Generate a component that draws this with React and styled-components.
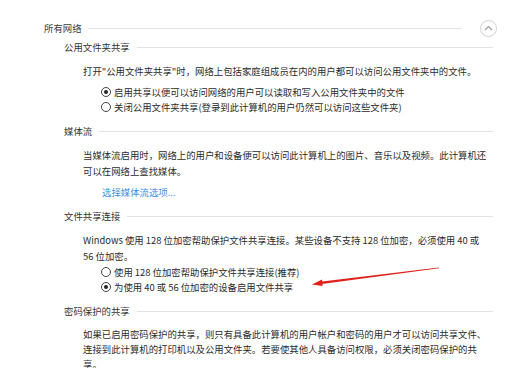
import React from 'react';
import styled, { createGlobalStyle } from 'styled-components';

const GlobalStyle = createGlobalStyle`
  body {
    margin: 0;
    background: #fff;
  }
`;

const sections = [
  {
    title: '公用文件夹共享',
    text: ['打开"公用文件夹共享"时，网络上包括家庭组成员在内的用户都可以访问公用文件夹中的文件。'],
    options: [
      { label: '启用共享以便可以访问网络的用户可以读取和写入公用文件夹中的文件', checked: true },
      { label: '关闭公用文件夹共享(登录到此计算机的用户仍然可以访问这些文件夹)', checked: false },
    ],
    gap: 5,
  },
  {
    title: '媒体流',
    text: [
      '当媒体流启用时，网络上的用户和设备便可以访问此计算机上的图片、音乐以及视频。此计算机还',
      '可以在网络上查找媒体。',
    ],
    link: '选择媒体流选项...',
  },
  {
    title: '文件共享连接',
    text: [
      'Windows 使用 128 位加密帮助保护文件共享连接。某些设备不支持 128 位加密，必须使用 40 或',
      '56 位加密。',
    ],
    options: [
      { label: '使用 128 位加密帮助保护文件共享连接(推荐)', checked: false },
      { label: '为使用 40 或 56 位加密的设备启用文件共享', checked: true },
    ],
    gap: 0,
  },
  {
    title: '密码保护的共享',
    text: [
      '如果已启用密码保护的共享，则只有具备此计算机的用户帐户和密码的用户才可以访问共享文件、',
      '连接到此计算机的打印机以及公用文件夹。若要使其他人具备访问权限，必须关闭密码保护的共',
      '享。',
    ],
    lineHeight: 15,
  },
];

const App = () => {
  return (
    <>
      <GlobalStyle />
      <Page>
        <TopRow>
          <TopTitle>所有网络</TopTitle>
          <Rule />
          <CollapseButton aria-label="折叠">
            <svg width="9" height="6" viewBox="0 0 9 6">
              <path d="M1 5 L4.5 1.5 L8 5" fill="none" stroke="#9a9a9a" strokeWidth="1.1" />
            </svg>
          </CollapseButton>
        </TopRow>

        {sections.map((s, i) => (
          <Section key={s.title} $first={i === 0}>
            <SectionHead>
              <SectionTitle>{s.title}</SectionTitle>
              <Rule />
            </SectionHead>
            <Body>
              <Para $lh={s.lineHeight || 16}>
                {s.text.map((line, j) => (
                  <Line key={j}>{line}</Line>
                ))}
              </Para>
              {s.options && (
                <Options $gap={s.gap}>
                  {s.options.map((o) => (
                    <Option key={o.label}>
                      <Radio $checked={o.checked} />
                      <span>{o.label}</span>
                    </Option>
                  ))}
                </Options>
              )}
              {s.link && <MediaLink href="#">{s.link}</MediaLink>}
            </Body>
          </Section>
        ))}

        <Arrow width="140" height="30" viewBox="0 0 140 30">
          <path d="M137 5.4 L18 19.8 L18 22.2 L137 6.3 Z" fill="#e0201b" />
          <path d="M10 22.4 L20 17.4 L20.6 24 Z" fill="#e0201b" />
        </Arrow>
      </Page>
    </>
  );
};

// 스타일
const Page = styled.div`
  position: relative;
  box-sizing: border-box;
  width: 507px;
  height: 368px;
  overflow: hidden;
  padding: 20px 14px 0 44px;
  font-family: "Microsoft YaHei", "Noto Sans CJK SC", sans-serif;
  font-size: 9.4px;
  color: #2b2b2b;
`;

const TopRow = styled.div`
  display: flex;
  align-items: center;
  height: 16px;
  gap: 6px;
`;

const TopTitle = styled.span`
  color: #3a3a3a;
  white-space: nowrap;
`;

const Rule = styled.div`
  flex: 1;
  height: 1px;
  background: #e2e2e2;
`;

const CollapseButton = styled.button`
  display: flex;
  align-items: center;
  justify-content: center;
  box-sizing: border-box;
  width: 17px;
  height: 17px;
  margin-left: 12px;
  margin-right: -4px;
  padding: 0;
  border: 1px solid #cfcfcf;
  border-radius: 50%;
  background: #fff;
`;

const Section = styled.section`
  margin-left: 20px;
  margin-top: ${(p) => (p.$first ? '3px' : '8px')};
`;

const SectionHead = styled.div`
  display: flex;
  align-items: center;
  height: 16px;
  gap: 7px;
`;

const SectionTitle = styled.span`
  white-space: nowrap;
  color: #333;
`;

const Body = styled.div`
  padding-left: 19px;
  padding-top: 8px;
`;

const Para = styled.p`
  margin: 0;
  line-height: ${(p) => p.$lh}px;
  white-space: nowrap;
`;

const Line = styled.span`
  display: block;
`;

const Options = styled.div`
  margin-top: ${(p) => p.$gap}px;
  padding-left: 18px;
`;

const Option = styled.label`
  display: flex;
  align-items: center;
  gap: 3px;
  height: 15.5px;
  white-space: nowrap;
`;

const Radio = styled.span`
  position: relative;
  box-sizing: border-box;
  width: 10px;
  height: 10px;
  border: 1px solid #444;
  border-radius: 50%;
  flex-shrink: 0;

  &::after {
    content: '';
    display: ${(p) => (p.$checked ? 'block' : 'none')};
    position: absolute;
    left: 2px;
    top: 2px;
    width: 4px;
    height: 4px;
    border-radius: 50%;
    background: #222;
  }
`;

const MediaLink = styled.a`
  display: block;
  margin: 5px 0 0 19px;
  line-height: 16px;
  color: #3d8ee0;
  text-decoration: none;
`;

const Arrow = styled.svg`
  position: absolute;
  left: 302px;
  top: 262px;
`;

export default App;
